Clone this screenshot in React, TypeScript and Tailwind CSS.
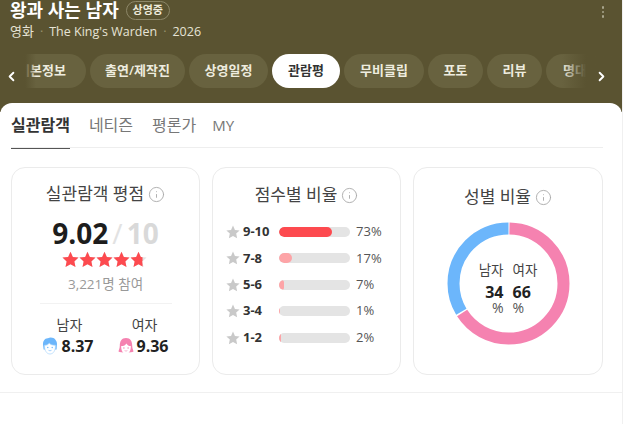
import { Info, ChevronLeft, ChevronRight } from 'lucide-react'

const font = { fontFamily: '"Open Sans", "Noto Sans CJK KR", sans-serif' }

const pills = [
  { label: '기본정보', w: 'w-[88px]' },
  { label: '출연/제작진', w: 'w-[95px]' },
  { label: '상영일정', w: 'w-[79px]' },
  { label: '관람평', w: 'w-[68px]', active: true },
  { label: '무비클립', w: 'w-[80px]' },
  { label: '포토', w: 'w-[55px]' },
  { label: '리뷰', w: 'w-[55px]' },
  { label: '명대사', w: 'w-[70px]' },
]

const scores = [
  { range: '9-10', pct: 73, bar: 'w-[53px] bg-[#fd4a4f]' },
  { range: '7-8', pct: 17, bar: 'w-[13px] bg-[#fda4a7]' },
  { range: '5-6', pct: 7, bar: 'w-[5px] bg-[#fda4a7]' },
  { range: '3-4', pct: 1, bar: 'w-[1px] bg-[#fda4a7]' },
  { range: '1-2', pct: 2, bar: 'w-[2px] bg-[#fda4a7]' },
]

const STAR = 'M9 .8l2.5 5.5 6 .7-4.4 4 1.2 5.9L9 14l-5.3 2.9 1.2-5.9-4.4-4 6-.7z'

function RatingStar({ half }: { half?: boolean }) {
  return (
    <svg width="17" height="17" viewBox="0 0 18 18">
      <path d={STAR} fill="#e3e3e3" />
      <path d={STAR} fill="#fd4a4f" style={half ? { clipPath: 'inset(0 25% 0 0)' } : undefined} />
    </svg>
  )
}

function GrayStar() {
  return (
    <svg width="14" height="14" viewBox="0 0 18 18" className="shrink-0">
      <path d={STAR} fill="#c9c9c9" />
    </svg>
  )
}

function Male() {
  return (
    <svg width="16" height="18" viewBox="0 0 16 18" className="shrink-0">
      <path d="M1.2 9C.2 4 3.2.8 6 1.2 8 0 12 .3 13.6 3c1.600 2 1.600 4 1.200 6l-.2 3.500-13 0z" fill="#6cb6fb" />
      <path d="M2.600 8.200c2.400.2 3.800-.8 4.600-2.200 1.200 1.600 3.400 2.400 6.200 2.200.4 5-2 8.800-5.400 8.800S2.200 13.200 2.600 8.200z" fill="#fff" stroke="#a9d5fc" strokeWidth=".7" />
      <circle cx="5.800" cy="10.500" r=".7" fill="#6cb6fb" />
      <circle cx="10.200" cy="10.500" r=".7" fill="#6cb6fb" />
      <path d="M6.500 13.300q1.500 1 3 0" stroke="#6cb6fb" strokeWidth=".6" fill="none" />
    </svg>
  )
}

function Female() {
  return (
    <svg width="16" height="18" viewBox="0 0 16 18" className="shrink-0">
      <path d="M8 1C3.500 1 1.800 4.500 1.800 8.500c0 3-1 4.500-1.300 6 1.500 1.500 13.500 1.500 15 0-.3-1.500-1.300-3-1.300-6C14.200 4.500 12.500 1 8 1z" fill="#f582b0" />
      <path d="M3.200 9c2.600 0 4.400-1 5.200-2.600C9.200 8 10.800 9 12.800 9c.2 4.800-2 8-4.800 8S3 13.800 3.200 9z" fill="#fff" />
      <circle cx="5.900" cy="11" r=".7" fill="#f582b0" />
      <circle cx="10.100" cy="11" r=".7" fill="#f582b0" />
      <path d="M6.600 13.600q1.400 1 2.800 0" stroke="#f582b0" strokeWidth=".6" fill="none" />
    </svg>
  )
}

function CardTitle({ children }: { children: string }) {
  return (
    <div className="flex items-center justify-center gap-[4px] text-[17px] leading-[22px] text-[#444]">
      <span>{children}</span>
      <Info size={17} strokeWidth={1.3} className="text-[#aaa]" />
    </div>
  )
}

function Donut() {
  const r = 55
  const c = 2 * Math.PI * r
  return (
    <div className="relative mt-[14px] h-[123px] w-[123px]">
      <svg width="123" height="123" viewBox="0 0 123 123" className="-rotate-90">
        <circle cx="61.500" cy="61.500" r={r} fill="none" stroke="#f582b0" strokeWidth="12" strokeDasharray={`${c * 0.66 - 1.500} ${c}`} strokeDashoffset={-1} />
        <circle cx="61.500" cy="61.500" r={r} fill="none" stroke="#6cb6fb" strokeWidth="12" strokeDasharray={`${c * 0.34 - 1.500} ${c}`} strokeDashoffset={-(c * 0.66 + 1)} />
      </svg>
      <div className="absolute inset-0 flex items-center justify-center gap-[9px] pt-[8px]">
        <div className="flex w-[26px] flex-col items-end">
          <span className="text-[13.500px] leading-[18px] whitespace-nowrap text-[#444]">남자</span>
          <span className="mt-[4px] text-base leading-[18px] font-bold text-[#222]">34</span>
          <span className="text-sm leading-[13px] text-[#555]">%</span>
        </div>
        <div className="flex w-[26px] flex-col items-start">
          <span className="text-[13.500px] leading-[18px] whitespace-nowrap text-[#444]">여자</span>
          <span className="mt-[4px] text-base leading-[18px] font-bold text-[#222]">66</span>
          <span className="text-sm leading-[13px] text-[#555]">%</span>
        </div>
      </div>
    </div>
  )
}

export default function App() {
  return (
    <div style={font} className="h-[424px] w-[640px] overflow-hidden bg-white">
      <div className="h-[424px] w-[623px] border-r border-[#f0f0f0]">
        <div className="relative h-[112px] bg-[#5a5331] text-white">
          <div className="flex h-[21px] items-center gap-[7px] pl-[10px]">
            <span className="text-lg leading-[21px] font-bold text-[#fff]">왕과 사는 남자</span>
            <span className="flex h-[19px] w-[44px] items-center justify-center rounded-full border border-[#8d8768] text-[11px] font-semibold whitespace-nowrap text-[#eeeadb]">상영중</span>
          </div>
          <div className="mt-[1px] flex h-[20px] items-center gap-[6px] pl-[10px] text-[12.500px] text-[#e6e3d5]">
            <span className="text-[13px]">영화</span>
            <span className="text-[#99946f]">·</span>
            <span>The King&apos;s Warden</span>
            <span className="text-[#99946f]">·</span>
            <span>2026</span>
          </div>
          <div className="absolute top-[6px] right-[18px] flex flex-col gap-[2px]">
            <span className="h-[2.500px] w-[2.500px] rounded-full bg-[#a9a58d]" />
            <span className="h-[2.500px] w-[2.500px] rounded-full bg-[#a9a58d]" />
            <span className="h-[2.500px] w-[2.500px] rounded-full bg-[#a9a58d]" />
          </div>
          <div className="relative mt-[12px] flex h-[34px] items-center">
            <div className="z-10 flex h-[34px] w-[36px] shrink-0 items-center bg-gradient-to-r from-[#5a5331] from-70% to-transparent pl-[4px]">
              <ChevronLeft size={15} strokeWidth={3} className="mt-[10px] text-white" />
            </div>
            <div className="-ml-[38px] flex min-w-0 flex-1 gap-[4px] overflow-hidden">
              {pills.map((p) => (
                <div
                  key={p.label}
                  className={`flex h-[34px] shrink-0 items-center justify-center rounded-full text-[13px] font-semibold whitespace-nowrap ${p.w} ${p.active ? 'bg-white text-[#333]' : 'bg-[#68623f] text-[#eeecdf]'}`}
                >
                  {p.label}
                </div>
              ))}
            </div>
            <div className="absolute top-0 right-0 flex h-[34px] w-[60px] items-center justify-end bg-gradient-to-l from-[#5a5331] from-60% to-transparent pr-[13px]">
              <ChevronRight size={15} strokeWidth={3} className="mt-[10px] text-white" />
            </div>
          </div>
        </div>

        <div className="relative -mt-[9px] h-[290px] rounded-t-[12px] border-b border-[#f0f0f0] bg-white px-[11px]">
          <div className="mr-[8px] flex h-[45px] items-center gap-[19px] border-b border-[#eeeeee] text-base text-[#777]">
            <span className="relative flex h-[45px] items-center font-semibold text-[#333]">
              실관람객
              <span className="absolute right-0 bottom-[-1px] left-0 h-[1px] bg-[#555]" />
            </span>
            <span>네티즌</span>
            <span>평론가</span>
            <span className="-ml-[3px] text-[15px]">MY</span>
          </div>

          <div className="mt-[19px] flex gap-[12px]">
            <div className="flex h-[208px] w-[189px] flex-col items-center rounded-[14px] border border-[#ebebeb] pt-[15px]">
              <CardTitle>실관람객 평점</CardTitle>
              <div className="mt-[10px] flex items-baseline text-[28px] leading-[36px] font-bold">
                <span className="text-[#1d1d1d]">9.02</span>
                <span className="mx-[4px] font-normal text-[#e2e2e2]">/</span>
                <span className="text-[#d9d9d9]">10</span>
              </div>
              <div className="-ml-[3px] flex">
                {[0, 1, 2, 3].map((i) => (
                  <RatingStar key={i} />
                ))}
                <RatingStar half />
              </div>
              <div className="mt-[6px] text-[13.500px] leading-[20px] text-[#999]">3,221명 참여</div>
              <div className="mt-[9px] h-px w-[132px] bg-[#f2f2f2]" />
              <div className="mt-[11px] flex gap-[24px]">
                <div className="flex flex-col items-center">
                  <span className="pl-[3px] text-sm leading-[20px] text-[#444]">남자</span>
                  <div className="flex items-center gap-[3px]">
                    <Male />
                    <span className="text-base leading-[22px] font-bold text-[#222]">8.37</span>
                  </div>
                </div>
                <div className="flex flex-col items-center">
                  <span className="pl-[3px] text-sm leading-[20px] text-[#444]">여자</span>
                  <div className="flex items-center gap-[3px]">
                    <Female />
                    <span className="text-base leading-[22px] font-bold text-[#222]">9.36</span>
                  </div>
                </div>
              </div>
            </div>

            <div className="flex h-[208px] w-[189px] flex-col rounded-[14px] border border-[#ebebeb] pt-[16px]">
              <CardTitle>점수별 비율</CardTitle>
              <div className="mt-[17px] flex flex-col gap-[8.400px] pl-[13px]">
                {scores.map((s) => (
                  <div key={s.range} className="flex h-[18px] items-center">
                    <GrayStar />
                    <span className="ml-[3px] w-[36px] text-[13px] font-bold text-[#333]">{s.range}</span>
                    <div className="h-[10px] w-[71px] overflow-hidden rounded-full bg-[#e4e4e4]">
                      <div className={`h-full rounded-full ${s.bar}`} />
                    </div>
                    <span className="ml-[6px] text-[13px] text-[#555]">{s.pct}%</span>
                  </div>
                ))}
              </div>
            </div>

            <div className="flex h-[208px] w-[190px] flex-col items-center rounded-[14px] border border-[#ebebeb] pt-[18px]">
              <CardTitle>성별 비율</CardTitle>
              <Donut />
            </div>
          </div>
        </div>
      </div>
    </div>
  )
}
